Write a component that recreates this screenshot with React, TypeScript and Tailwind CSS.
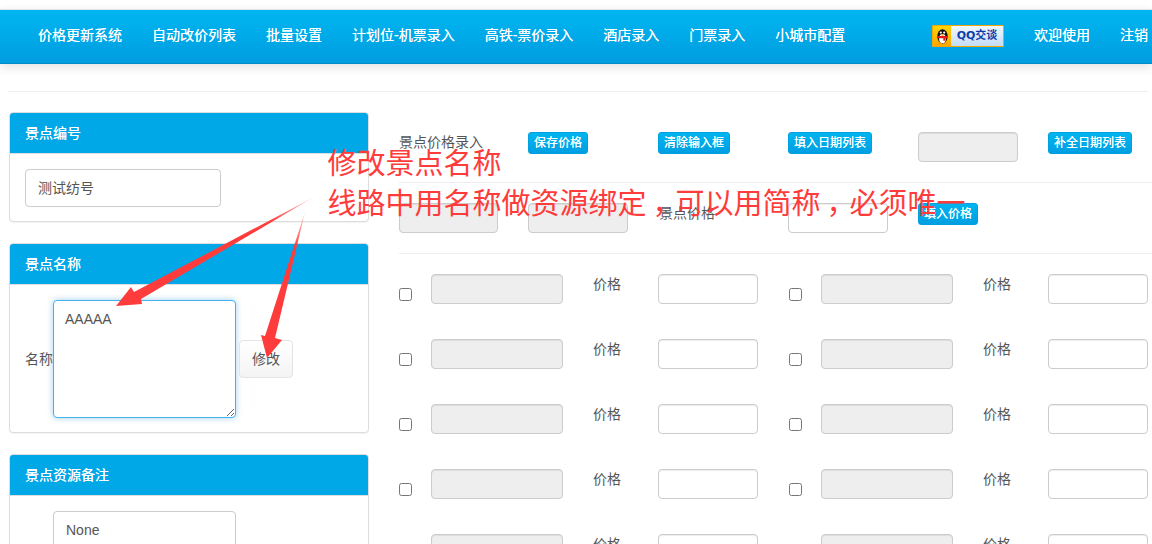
import React from "react";

const FONT = "[font-family:'Liberation_Sans','Noto_Sans_CJK_SC',sans-serif]";

function Panel({ title, children }: { title: string; children: React.ReactNode }) {
  return (
    <section className="mb-[21px] rounded-[4px] border border-[#dddddd] bg-white shadow-[0_1px_1px_rgba(0,0,0,0.05)]">
      <div className="flex h-[41px] items-center rounded-t-[3px] border-b border-[#dddddd] bg-[#00a8e8] px-[15px] text-[14px] text-white [text-shadow:0_0_0.4px_#fff]">
        {title}
      </div>
      {children}
    </section>
  );
}

function BlueButton({ label, w }: { label: string; w: string }) {
  return (
    <button
      type="button"
      className={`h-[22px] ${w} rounded-[3px] border border-[#00a0e0] bg-gradient-to-b from-[#00b5f0] to-[#009fe2] text-center text-[12px] leading-[20px] text-white [text-shadow:0_0_0.4px_#fff]`}
    >
      {label}
    </button>
  );
}

function Disabled({ w }: { w: string }) {
  return (
    <div className={`h-[30px] ${w} shrink-0 rounded-[4px] border border-[#cccccc] bg-[#eeeeee] shadow-[inset_0_1px_1px_rgba(0,0,0,0.075)]`} />
  );
}

function Blank({ w }: { w: string }) {
  return (
    <div className={`h-[30px] ${w} shrink-0 rounded-[4px] border border-[#cccccc] bg-white shadow-[inset_0_1px_1px_rgba(0,0,0,0.075)]`} />
  );
}

function PriceCell() {
  return (
    <div className="flex w-[390px] shrink-0 items-start">
      <div className="flex h-[30px] w-[32px] shrink-0 items-start pt-[14px]">
        <input type="checkbox" className="m-0 block h-[13px] w-[13px]" />
      </div>
      <Disabled w="w-[132px]" />
      <span className="ml-[30px] w-[65px] shrink-0 text-[14px] leading-[20px] text-[#555555]">价格</span>
      <Blank w="w-[100px]" />
    </div>
  );
}

function Penguin() {
  return (
    <svg width="17" height="18" viewBox="0 0 20 20" className="block">
      <ellipse cx="10" cy="10.5" rx="6" ry="8.5" fill="#111" />
      <ellipse cx="10" cy="13" rx="4" ry="5.5" fill="#fff" />
      <circle cx="8" cy="6" r="1.3" fill="#fff" />
      <circle cx="12" cy="6" r="1.3" fill="#fff" />
      <path d="M7.5 8 H12.5 L10 10 Z" fill="#f5a000" />
      <path d="M4 10 H16 V12.5 H13.5 V15.5 H11 V12.5 H4 Z" fill="#e01818" />
      <path d="M5 18 H9 V20 H3.5 Z M11 18 H15 L16.5 20 H11 Z" fill="#f5a000" />
    </svg>
  );
}

function QQBadge() {
  return (
    <div className="flex h-[22px] w-[72px] overflow-hidden rounded-[1px] border border-[#f5a500] bg-white">
      <div className="flex w-[18px] items-center justify-center bg-gradient-to-b from-[#ffd400] to-[#ffa800]">
        <Penguin />
      </div>
      <div className="flex flex-1 items-center justify-center bg-gradient-to-b from-[#f2f8ff] to-[#c4dcf6] text-[11px] font-bold leading-none text-[#0a3ca8] [font-family:'DejaVu_Sans','Noto_Sans_CJK_SC',sans-serif]">
        QQ交谈
      </div>
    </div>
  );
}

const navLeft = ["价格更新系统", "自动改价列表", "批量设置", "计划位-机票录入", "高铁-票价录入", "酒店录入", "门票录入", "小城市配置"];

export default function App() {
  return (
    <div className={`relative h-[544px] w-[1152px] overflow-hidden bg-white pt-[9px] ${FONT}`}>
      <header className="flex h-[55px] items-center border-t border-t-[#e4e4e4] border-b border-b-[#0089c8] bg-gradient-to-b from-[#00b6f1] to-[#009de0] pb-[2px] pl-[38px] pr-[4px] text-[14px] text-white shadow-[0_3px_10px_rgba(0,0,0,0.12)] [text-shadow:0_0_0.4px_#fff]">
        <nav className="flex gap-[30px]">
          {navLeft.map((n) => (
            <span key={n}>{n}</span>
          ))}
        </nav>
        <div className="ml-auto flex items-center gap-[30px]">
          <QQBadge />
          <span>欢迎使用</span>
          <span>注销</span>
        </div>
      </header>

      <hr className="ml-[8px] mt-[27px] w-[1140px] border-t border-[#eeeeee]" />

      <main className="mt-[20px] flex">
        <aside className="ml-[9px] w-[360px] shrink-0">
          <Panel title="景点编号">
            <div className="px-[15px] pb-[14px] pt-[15px]">
              <div className="flex h-[38px] w-[196px] items-center rounded-[4px] border border-[#cccccc] px-[12px] text-[14px] text-[#555555]">
                测试纺号
              </div>
            </div>
          </Panel>
          <Panel title="景点名称">
            <div className="flex items-center px-[15px] pb-[14px] pt-[15px]">
              <span className="w-[28px] shrink-0 text-[14px] text-[#555555]">名称</span>
              <textarea
                readOnly
                defaultValue="AAAAA"
                className="block h-[118px] w-[183px] shrink-0 rounded-[4px] border border-[#46b2ea] bg-white px-[11px] py-[8px] text-[14px] leading-[20px] text-[#555555] shadow-[0_0_6px_rgba(102,175,233,0.6)] outline-none"
              />
              <button
                type="button"
                className="ml-[3px] h-[38px] w-[54px] rounded-[4px] border border-[#e4e4e4] bg-gradient-to-b from-white to-[#f4f4f4] text-[14px] text-[#555555]"
              >
                修改
              </button>
            </div>
          </Panel>
          <Panel title="景点资源备注">
            <div className="px-[43px] py-[15px]">
              <div className="flex h-[38px] w-[183px] items-center rounded-[4px] border border-[#cccccc] px-[12px] text-[14px] text-[#555555]">
                None
              </div>
            </div>
          </Panel>
        </aside>

        <div className="ml-[29px] flex-1 pt-[20px]">
          <div className="grid h-[30px] grid-cols-[repeat(6,130px)] items-start">
            <span className="pl-px text-[14px] leading-[20px] text-[#555555]">景点价格录入</span>
            <BlueButton label="保存价格" w="w-[60px]" />
            <BlueButton label="清除输入框" w="w-[72px]" />
            <BlueButton label="填入日期列表" w="w-[84px]" />
            <Disabled w="w-[100px]" />
            <BlueButton label="补全日期列表" w="w-[84px]" />
          </div>
          <hr className="ml-px mt-[20px] border-t border-[#eeeeee]" />
          <div className="mt-[20px] grid h-[30px] grid-cols-[repeat(6,130px)] items-start">
            <div className="pl-px">
              <Disabled w="w-[99px]" />
            </div>
            <Disabled w="w-[100px]" />
            <span className="pl-px text-[14px] leading-[20px] text-[#555555]">景点价格</span>
            <Blank w="w-[100px]" />
            <BlueButton label="填入价格" w="w-[60px]" />
          </div>
          <hr className="ml-px mt-[20px] border-t border-[#eeeeee]" />
          <div className="ml-px mt-[20px] flex flex-col gap-[35px]">
            {[0, 1, 2, 3, 4].map((i) => (
              <div key={i} className="flex">
                <PriceCell />
                <PriceCell />
              </div>
            ))}
          </div>
        </div>
      </main>

      {/* red annotation laid over the page */}
      <div className="pointer-events-none absolute left-[327.5px] top-[141px] whitespace-nowrap text-[29px] font-normal leading-[40px] text-[#ff3c3c] [font-family:'Noto_Sans_CJK_SC',sans-serif]">
        <div>修改景点名称</div>
        <div>
          线路中用名称做资源绑定<span className="relative left-[6px]">，</span>可以用简称<span className="relative left-[6px]">，</span>必须唯一
        </div>
      </div>
      <svg className="pointer-events-none absolute left-0 top-0" width="1152" height="544" viewBox="0 0 1152 544">
        <defs>
          <linearGradient id="a1" gradientUnits="userSpaceOnUse" x1="314" y1="197" x2="270" y2="221">
            <stop offset="0" stopColor="#ff3c3c" stopOpacity="0.2" />
            <stop offset="1" stopColor="#ff3c3c" />
          </linearGradient>
          <linearGradient id="a2" gradientUnits="userSpaceOnUse" x1="305" y1="212" x2="296" y2="248">
            <stop offset="0" stopColor="#ff3c3c" stopOpacity="0.2" />
            <stop offset="1" stopColor="#ff3c3c" />
          </linearGradient>
        </defs>
        <polygon points="314,197 134,292 131,287 116,306 142,304 141,299" fill="url(#a1)" />
        <polygon points="305,212 275,338 282,340 267,358 261,335 265,336" fill="url(#a2)" />
      </svg>
    </div>
  );
}
